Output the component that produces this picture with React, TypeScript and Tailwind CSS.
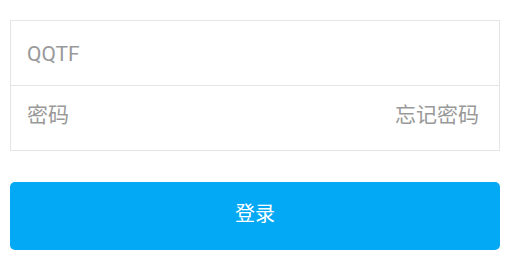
import React from "react";

export default function App() {
  return (
    <div
      className="w-[507px] h-[258px] bg-white pt-5 px-[10px]"
      style={{ fontFamily: 'Roboto, "Noto Sans CJK SC", sans-serif' }}
    >
      {/* 输入框 */}
      <div className="border border-[#e5e5e5] w-[490px]">
        <div className="h-16 flex items-center px-4 pt-1 text-[21px] text-[#999999]">
          QQTF
        </div>
        <div className="h-px bg-[#e5e5e5]" />
        <div className="h-16 flex items-center justify-between pl-4 pr-5 pb-1 text-[21px] text-[#999999]">
          <span>密码</span>
          <span>忘记密码</span>
        </div>
      </div>

      {/* 登录按钮 */}
      <button className="mt-[31px] w-[490px] h-[68px] pb-1 rounded-[5px] bg-[#03a9f4] text-white text-[20px]">
        登录
      </button>
    </div>
  );
}
